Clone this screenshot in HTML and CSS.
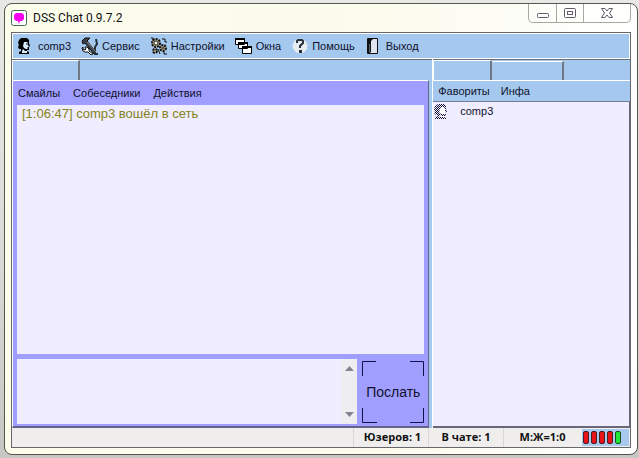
FILE: index.html
```html
<!DOCTYPE html>
<html lang="ru">
<head>
<meta charset="utf-8">
<title>DSS Chat 0.9.7.2</title>
<link rel="stylesheet" href="styles.css">
</head>
<body>
<div class="window">
  <header class="titlebar">
    <svg class="app-icon" viewBox="0 0 16 16" aria-hidden="true"><rect x=".5" y=".5" width="15" height="15" rx="2" fill="#fff" stroke="#3f7050"/><path d="M5 3h6l2 2v4l-2 2H9l-1 3-1-3H5L3 9V5z" fill="#f800f0"/></svg>
    <h1 class="title">DSS Chat 0.9.7.2</h1>
    <div class="caption">
      <button type="button" aria-label="Свернуть"><svg width="14" height="12" viewBox="0 0 14 12"><rect x="1.500" y="6.500" width="11" height="4" rx="1" fill="#fff" stroke="#625a68"/></svg></button>
      <button type="button" aria-label="Развернуть"><svg width="14" height="12" viewBox="0 0 14 12"><rect x="1.500" y="1.500" width="11" height="9" rx="1" fill="#fff" stroke="#625a68"/><rect x="4.500" y="4.500" width="5" height="3" fill="#fff" stroke="#625a68"/></svg></button>
      <button type="button" class="close" aria-label="Закрыть"><svg width="14" height="12" viewBox="0 0 14 12"><path d="M1.500 1.500h3.500l2 2.500 2-2.500h3.500L9.500 6l3 4.500H9L7 8l-2 2.500H1.500l3-4.500z" fill="#fff" stroke="#625a68"/></svg></button>
    </div>
  </header>
  <div class="client">
    <nav class="menubar">
      <button type="button"><svg viewBox="0 0 18 18"><path d="M4 1h6l2 2v3l1 3-1 1v3h-2v1l2 1v2H2v-2l2-1v-2H2l-1-2 1-2-1-2 1-3z" fill="#000"/><path d="M7 5l3 0 1 1v2l1 2h-1v2H9l-2-1-1-2z" fill="#d8ecff"/><path d="M6 12l2 2h2v2H5v-2z" fill="#d8ecff"/><path d="M9 7h2M10 11h1" stroke="#000"/></svg><span>comp3</span></button>
      <button type="button"><svg viewBox="0 0 18 18"><path d="M1 4l3-3h5L6 4l9 11-2 2L4 6 2 7z" fill="#39404b" stroke="#111"/><path d="M15 2l1 5-2 3v7h3" fill="none" stroke="#26313e" stroke-width="2"/><path d="M2 10v2l2 1 1-1-1-2 2 0 2 2v2l4 3-2 1-3-3H4l-2-1-1-3z" fill="#fff" stroke="#111"/><path d="M6 5l9 10" stroke="#8d8678"/></svg><span>Сервис</span></button>
      <button type="button"><svg viewBox="0 0 18 18"><g fill="#b8ab88" stroke="#111" stroke-width="2"><circle cx="6" cy="6" r="4" stroke-dasharray="2 1"/><circle cx="13" cy="11" r="3" stroke-dasharray="2 1"/><circle cx="5" cy="14" r="2" stroke-dasharray="2 1"/></g><path d="M12 2h3v3h2M1 1h2v3M14 15v2h3M8 12l2 5" fill="none" stroke="#111"/><circle cx="6" cy="6" r="2" fill="#fff" stroke="#222"/><circle cx="13" cy="11" r="1" fill="#fff" stroke="#222"/></svg><span>Настройки</span></button>
      <button type="button"><svg viewBox="0 0 18 18"><g fill="#fff" stroke="#000"><path d="M.5 1.500h9v6h-9zM3.500 5.500h9v6h-9zM7.500 9.500h9v7h-9z"/></g><path d="M0 2h10M3 6h10M7 10h10" stroke="#000" stroke-width="2"/></svg><span>Окна</span></button>
      <button type="button"><svg viewBox="0 0 18 18"><circle cx="9" cy="9" r="7" fill="#e8edf2" stroke="#f6f9fb" stroke-dasharray="1 1"/><path d="M6 6V4l1-1h4l1 1v2l-3 3v2" fill="none" stroke="#26323c" stroke-width="2"/><rect x="8" y="13" width="3" height="3" fill="#26323c"/></svg><span>Помощь</span></button>
      <button type="button"><svg viewBox="0 0 18 18"><path d="M2.500 1.500h10v15h-10z" fill="#dfe4ee" stroke="#111"/><path d="M3 2h5l-2 2v11l-3 2z" fill="#111"/><path d="M4.500 7v8" stroke="#586678"/></svg><span>Выход</span></button>
    </nav>
    <main class="workspace">
      <section class="chat">
        <div class="tabs"><button type="button" class="tab chat-tab" aria-label="Чат"></button></div>
        <div class="chat-body">
          <nav class="submenu"><button type="button">Смайлы</button><button type="button">Собеседники</button><button type="button">Действия</button></nav>
          <div class="log"><p>[1:06:47] comp3 вошёл в сеть</p></div>
          <form class="compose">
            <div class="entry">
              <textarea aria-label="Сообщение"></textarea>
              <div class="scroll"><svg width="9" height="5" viewBox="0 0 9 5"><path d="M4.500 0L9 5H0z" fill="#858391"/></svg><svg width="9" height="5" viewBox="0 0 9 5"><path d="M4.500 5L9 0H0z" fill="#858391"/></svg></div>
            </div>
            <button type="button" class="send">
              <svg viewBox="0 0 62 62" aria-hidden="true"><path d="M14 .5H.5V15M48 .5h13.500V15M.5 47v14.500H15M61.500 47v14.500H48" fill="none" stroke="#10104a"/></svg>
              <span>Послать</span>
            </button>
          </form>
        </div>
      </section>
      <aside class="users">
        <div class="tabs"><button type="button" class="tab user-tab" aria-label="Пользователи"></button><button type="button" class="tab info-tab" aria-label="Информация"></button></div>
        <nav class="user-menu"><button type="button">Фавориты</button><button type="button">Инфа</button></nav>
        <ul class="user-list">
          <li><svg width="14" height="16" viewBox="0 0 14 16" aria-hidden="true"><defs><pattern id="dither" width="2" height="2" patternUnits="userSpaceOnUse"><path d="M0 0h1v1H0zM1 1h1v1H1z" fill="#10103c"/></pattern></defs><path d="M4 1h6l2 2v3l1 3-1 1v3h-2v1l2 1v1H1v-2l3-1v-1H2l-2-2 1-2-1-2 1-3z" fill="url(#dither)"/><path d="M7 4h3l1 2v2l1 2h-1v1H9l-2 0-2-2zM6 12l2 1h2v1H5z" fill="#fff"/></svg><span>comp3</span></li>
        </ul>
      </aside>
    </main>
    <footer class="status">
      <span class="cell total">Юзеров: 1</span>
      <span class="cell online">В чате: 1</span>
      <span class="cell ratio">М:Ж=1:0</span>
      <span class="lights"><i></i><i></i><i></i><i></i><i class="on"></i></span>
    </footer>
  </div>
</div>
</body>
</html>
```
FILE: styles.css
```css
* { box-sizing: border-box; }
body {
  margin: 0;
  height: 100vh;
  padding: 3px 1px 3px 4px;
  background: linear-gradient(#e8e8e6, #dcdcda 50%, #c6c6c4);
  font: 11px/16px "Liberation Sans", Arial, sans-serif;
  color: #10102c;
}
button {
  margin: 0;
  padding: 0;
  border: 0;
  background: none;
  font: inherit;
  color: inherit;
}
.window {
  height: 100%;
  display: flex;
  flex-direction: column;
  padding: 0 6px 6px;
  border: 1px solid #56564f;
  border-radius: 8px;
  background: linear-gradient(90deg, #fdfdec, #fbfbee 60%, #fff);
}
.titlebar {
  display: flex;
  align-items: center;
  height: 28px;
  flex: none;
}
.app-icon { width: 16px; height: 16px; }
.title {
  flex: 1;
  margin: 0 0 0 6px;
  font: 12px/20px Roboto, sans-serif;
  color: #111;
}
.caption {
  display: flex;
  align-self: flex-start;
  height: 19px;
  border: 1px solid #a9a79f;
  border-top: 0;
  border-radius: 0 0 5px 5px;
}
.caption button {
  display: flex;
  justify-content: center;
  align-items: center;
  width: 27px;
}
.caption button + button { border-left: 1px solid #a9a79f; }
.caption .close { width: 47px; }
.client {
  flex: 1;
  min-height: 0;
  display: flex;
  flex-direction: column;
  border: 1px solid #66666c;
  background: #a5c9ee;
}
.menubar {
  display: flex;
  gap: 10px;
  flex: none;
  height: 26px;
  padding: 0 4px;
  border: 1px solid #fff;
  box-shadow: 0 1px #6a7078;
}
.menubar button {
  display: flex;
  align-items: center;
  gap: 3px;
}
.menubar svg { width: 18px; height: 18px; }
.workspace {
  flex: 1;
  min-height: 0;
  display: flex;
  gap: 3px;
}
.chat {
  flex: 1;
  display: flex;
  flex-direction: column;
}
.tabs {
  display: flex;
  align-items: flex-end;
  flex: none;
  height: 21px;
}
.tab {
  height: 20px;
  border: 1px solid #fff;
  border-right: 2px solid #6f7883;
  border-bottom: 0;
}
.chat-tab { width: 68px; }
.user-tab { width: 59px; }
.info-tab { width: 72px; height: 19px; border-left: 0; }
.chat-body {
  flex: 1;
  min-height: 0;
  display: flex;
  flex-direction: column;
  padding: 0 4px 2px;
  border: 1px solid #fff;
  border-right-color: #65658a;
  border-bottom: 2px solid #62628b;
  background: #a09fff;
}
.submenu, .user-menu {
  display: flex;
  align-items: center;
  gap: 13px;
  flex: none;
}
.submenu { height: 24px; padding-left: 1px; }
.log {
  flex: 1;
  min-height: 0;
  padding: 1px 5px;
  background: #efedff;
  font-size: 13px;
  color: #858322;
}
.log p { margin: 0; }
.compose {
  display: flex;
  gap: 5px;
  height: 65px;
  flex: none;
  margin: 5px 0 0;
}
.entry { flex: 1; display: flex; background: #efedff; }
textarea {
  flex: 1;
  min-width: 0;
  padding: 2px 5px;
  border: 0;
  outline: 0;
  resize: none;
  background: transparent;
  font: inherit;
}
.scroll {
  display: flex;
  flex-direction: column;
  justify-content: space-between;
  align-items: center;
  width: 16px;
  padding: 7px 0;
  background: #eeeef1;
}
.send {
  display: grid;
  place-items: center;
  align-self: center;
  width: 62px;
  height: 62px;
  font-size: 14px;
}
.send > * { grid-area: 1 / 1; }
.send svg { width: 62px; height: 62px; }
.users {
  width: 32%;
  display: flex;
  flex-direction: column;
  border-left: 1px solid #fff;
}
.user-menu {
  height: 22px;
  padding-left: 5px;
  gap: 11px;
  border-top: 1px solid #fff;
  border-bottom: 1px solid #737b96;
}
.user-list {
  flex: 1;
  margin: 0;
  padding: 1px;
  list-style: none;
  border: solid #68687c;
  border-width: 0 1px 2px 0;
  background: #efedff;
}
.user-list li { display: flex; align-items: center; gap: 12px; }
.status {
  display: flex;
  flex: none;
  height: 19px;
  background: #f0eeec;
  font: bold 11px/18px "Open Sans", sans-serif;
  color: #111;
}
.cell { border-left: 1px solid #d9d6d4; text-align: center; }
.total { margin-left: auto; width: 75px; padding-left: 3px; }
.online { width: 75px; }
.ratio { width: 78px; }
.lights {
  display: flex;
  align-items: center;
  gap: 2px;
  width: 47px;
  margin: 1px;
  padding-left: 1px;
  background: #a8c8ee;
}
.lights i {
  width: 6px;
  height: 13px;
  border: 1px solid #482020;
  border-radius: 2px;
  background: #e81218;
}
.lights .on { border-color: #185020; background: #20e838; }
```
